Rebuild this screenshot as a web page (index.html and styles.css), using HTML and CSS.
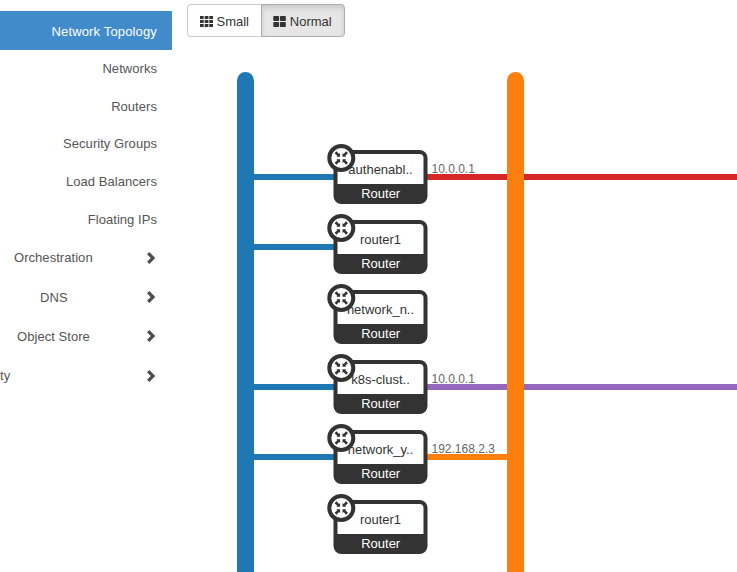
FILE: index.html
```html
<!DOCTYPE html>
<html lang="en">
<head>
<meta charset="utf-8">
<title>Network Topology</title>
<link rel="stylesheet" href="styles.css">
</head>
<body>
<div class="layout">
  <nav class="sidebar">
    <a class="item active">Network Topology</a>
    <a class="item">Networks</a>
    <a class="item">Routers</a>
    <a class="item">Security Groups</a>
    <a class="item">Load Balancers</a>
    <a class="item">Floating IPs</a>
    <a class="group"><span class="label orchestration">Orchestration</span><svg class="chevron" viewBox="0 0 8 12"><path d="M1.2 1.2 6 6 1.2 10.8"/></svg></a>
    <a class="group"><span class="label dns">DNS</span><svg class="chevron" viewBox="0 0 8 12"><path d="M1.2 1.2 6 6 1.2 10.8"/></svg></a>
    <a class="group"><span class="label store">Object Store</span><svg class="chevron" viewBox="0 0 8 12"><path d="M1.2 1.2 6 6 1.2 10.8"/></svg></a>
    <a class="group"><span class="label identity">ty</span><svg class="chevron" viewBox="0 0 8 12"><path d="M1.2 1.2 6 6 1.2 10.8"/></svg></a>
  </nav>
  <main class="content">
    <div class="toggle">
      <button class="btn"><svg class="icon-small" viewBox="0 0 13 11"><path d="M0 0h3.700v3H0zM4.700 0h3.700v3H4.700zM9.300 0H13v3H9.300zM0 4h3.700v3H0zM4.700 4h3.700v3H4.700zM9.300 4H13v3H9.300zM0 8h3.700v3H0zM4.700 8h3.700v3H4.700zM9.300 8H13v3H9.300z"/></svg>Small</button>
      <button class="btn pressed"><svg class="icon-normal" viewBox="0 0 13 11"><rect x=".3" width="5.800" height="5" rx=".8"/><rect x="7" width="5.800" height="5" rx=".8"/><rect x=".3" y="6" width="5.800" height="5" rx=".8"/><rect x="7" y="6" width="5.800" height="5" rx=".8"/></svg>Normal</button>
    </div>
    <svg class="topology" width="565" height="535" viewBox="172 37 565 535">
      <defs>
        <g id="router">
          <rect class="body" x="2" y="2" width="90" height="50" rx="6"/>
          <path class="footer" d="M2 34h90v14q0 4-4 4H6q-4 0-4-4z"/>
          <text class="type" x="47.200" y="48">Router</text>
        </g>
        <g id="badge">
          <circle class="ring" r="12"/>
          <g id="arrow-pair">
            <path class="arrow" d="M-1.200-1.200V-5L-2.300-4-4.800-6.700-6.700-4.800-4-2.300-5-1.200z"/>
            <path class="arrow" d="M1.200 1.200V5L2.300 4 4.800 6.700 6.700 4.800 4 2.300 5 1.200z"/>
          </g>
          <use href="#arrow-pair" transform="rotate(90)"/>
        </g>
      </defs>
      <g class="links">
        <path class="blue" d="M253 177h82M253 247h82M253 387h82M253 457h82"/>
        <path class="red" d="M426 177h311"/>
        <path class="purple" d="M426 387h311"/>
        <path class="orange" d="M426 457h85"/>
      </g>
      <rect class="network-blue" x="237" y="72" width="17" height="520" rx="8.500"/>
      <rect class="network-orange" x="507" y="72" width="17" height="520" rx="8.500"/>
      <g class="addresses">
        <text x="431.500" y="173">10.0.0.1</text>
        <text x="431.500" y="383">10.0.0.1</text>
        <text x="431.500" y="453">192.168.2.3</text>
      </g>
      <g transform="translate(333.500 150)"><use href="#router"/><text class="name" x="47" y="24">authenabl..</text><use href="#badge" x="7.800" y="8"/></g>
      <g transform="translate(333.500 220)"><use href="#router"/><text class="name" x="47" y="24">router1</text><use href="#badge" x="7.800" y="8"/></g>
      <g transform="translate(333.500 290)"><use href="#router"/><text class="name" x="47" y="24">network_n..</text><use href="#badge" x="7.800" y="8"/></g>
      <g transform="translate(333.500 360)"><use href="#router"/><text class="name" x="47" y="24">k8s-clust..</text><use href="#badge" x="7.800" y="8"/></g>
      <g transform="translate(333.500 430)"><use href="#router"/><text class="name" x="47" y="24">network_y..</text><use href="#badge" x="7.800" y="8"/></g>
      <g transform="translate(333.500 500)"><use href="#router"/><text class="name" x="47" y="24">router1</text><use href="#badge" x="7.800" y="8"/></g>
    </svg>
  </main>
</div>
</body>
</html>
```
FILE: styles.css
```css
* { box-sizing: border-box; }
body {
  margin: 0;
  height: 572px;
  overflow: hidden;
  background: #fff;
  color: #333;
  font: 13px/18px "Liberation Sans", Helvetica, Arial, sans-serif;
}
.layout { display: flex; height: 572px; }
.sidebar {
  width: 172px;
  flex: none;
  padding-top: 11px;
  color: #555;
  letter-spacing: .05px;
  overflow: hidden;
}
.item {
  display: flex;
  align-items: center;
  justify-content: flex-end;
  height: 37.700px;
  padding-right: 15px;
}
.item.active {
  height: 39px;
  padding-top: 2px;
  background: #428bca;
  color: #fff;
  letter-spacing: .15px;
}
.group {
  display: flex;
  align-items: center;
  justify-content: space-between;
  height: 39.400px;
  padding-right: 17px;
}
.label { white-space: nowrap; }
.orchestration { margin-left: 14px; }
.dns { margin-left: 40px; }
.store { margin-left: 17px; }
.identity { margin-left: 0; }
.chevron {
  width: 8px;
  height: 12px;
  margin-top: -1px;
  fill: none;
  stroke: #4d4d4d;
  stroke-width: 3.200;
}
.content { flex: 1; min-width: 0; }
.toggle { display: flex; padding: 4px 0 0 15px; height: 37px; }
.btn {
  display: flex;
  align-items: center;
  justify-content: center;
  gap: 3.500px;
  width: 75px;
  height: 33px;
  padding: 2px 1px 0 0;
  border: 1px solid #ccc;
  border-right: 0;
  border-radius: 4px 0 0 4px;
  background: #fff;
  color: #333;
  font: inherit;
}
.btn.pressed {
  width: 84px;
  margin-left: -1px;
  padding-right: 1px;
  border: 1px solid #adadad;
  border-radius: 0 4px 4px 0;
  background: #e6e6e6;
  box-shadow: inset 0 3px 5px rgba(0, 0, 0, .125);
}
.icon-small, .icon-normal { width: 13px; height: 11px; margin-top: -1px; fill: #333; }
.topology { display: block; }
.links path { fill: none; stroke-width: 6; }
.links .blue { stroke: #1f77b4; }
.links .red { stroke: #d62728; }
.links .purple { stroke: #9467bd; }
.links .orange { stroke: #ff7f0e; }
.network-blue { fill: #1f77b4; }
.network-orange { fill: #ff7f0e; }
.addresses { fill: #666; font-size: 12px; }
.body { fill: #fff; stroke: #333; stroke-width: 4; }
.footer { fill: #333; }
.type, .name { font-size: 13px; text-anchor: middle; }
.type { fill: #fff; }
.name { fill: #333; }
.ring { fill: #fff; stroke: #333; stroke-width: 4; }
.arrow { fill: #333; }
```
